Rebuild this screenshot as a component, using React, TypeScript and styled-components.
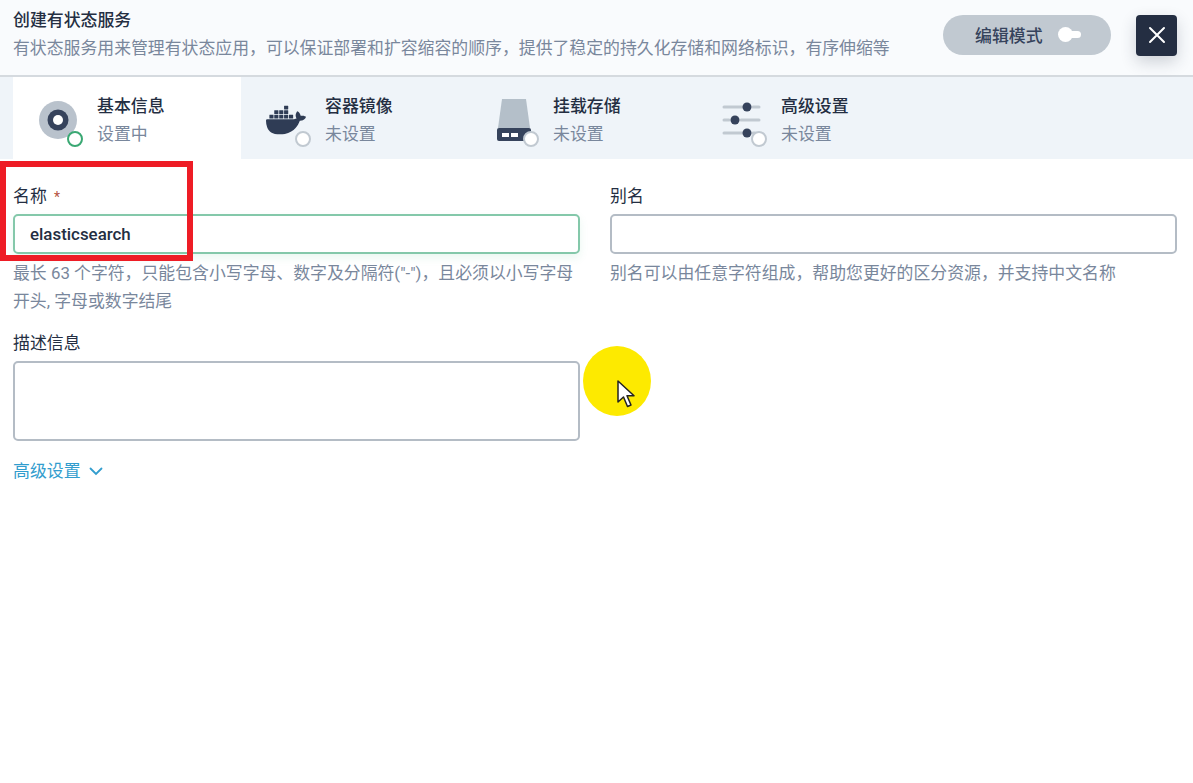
import React from 'react';
import styled, { createGlobalStyle } from 'styled-components';
import { SiDocker } from 'react-icons/si';

const FONT = `Roboto, "Noto Sans CJK SC", "Liberation Sans", sans-serif`;

const GlobalStyle = createGlobalStyle`
  html, body { margin: 0; padding: 0; background: #fff; }
  body { font-family: ${FONT}; color: #242e42; }
  * { box-sizing: border-box; }
`;

const tabs = [
  { key: 'base', title: '基本信息', desc: '设置中', active: true },
  { key: 'image', title: '容器镜像', desc: '未设置' },
  { key: 'mount', title: '挂载存储', desc: '未设置' },
  { key: 'advanced', title: '高级设置', desc: '未设置' },
];

const TabIcon = ({ name }: { name: string }) => {
  if (name === 'base') {
    return (
      <svg width="40" height="40" viewBox="0 0 40 40">
        <circle cx="20" cy="20" r="19" fill="#b9c2cc" />
        <circle cx="20" cy="20" r="10.5" fill="#36435c" />
        <circle cx="20" cy="20" r="5" fill="#fff" />
      </svg>
    );
  }
  if (name === 'image') {
    return <SiDocker size={46} color="#2f3c55" />;
  }
  if (name === 'mount') {
    return (
      <svg width="40" height="44" viewBox="0 0 40 44">
        <path d="M8 1h24l4 29H4z" fill="#b4bfc9" />
        <path d="M5 30h30a2 2 0 0 1 2 2v9a2 2 0 0 1-2 2H5a2 2 0 0 1-2-2v-9a2 2 0 0 1 2-2z" fill="#36435c" />
        <rect x="8" y="35" width="7" height="4" fill="#fff" />
        <rect x="17" y="35" width="7" height="4" fill="#fff" />
      </svg>
    );
  }
  return (
    <svg width="40" height="40" viewBox="0 0 40 40">
      <g stroke="#c1c9d1" strokeWidth="3" strokeLinecap="round">
        <path d="M2 7h18M31 7h6M2 20h5M19 20h18M2 33h18M31 33h2" />
      </g>
      <circle cx="25" cy="7" r="4.500" fill="#36435c" />
      <circle cx="13" cy="20" r="4.500" fill="#36435c" />
      <circle cx="25" cy="33" r="4.500" fill="#36435c" />
    </svg>
  );
};

export default function App() {
  return (
    <Page>
      <GlobalStyle />
      <Header>
        <HeaderText>
          <Title>创建有状态服务</Title>
          <Subtitle>有状态服务用来管理有状态应用，可以保证部署和扩容缩容的顺序，提供了稳定的持久化存储和网络标识，有序伸缩等</Subtitle>
        </HeaderText>
        <EditMode>
          编辑模式
          <Toggle />
        </EditMode>
        <CloseButton aria-label="关闭">
          <svg width="18" height="18" viewBox="0 0 18 18">
            <path d="M2 2l14 14M16 2L2 16" stroke="#fff" strokeWidth="2" strokeLinecap="round" />
          </svg>
        </CloseButton>
      </Header>
      <TabBar>
        {tabs.map(tab => (
          <Tab key={tab.key} $active={!!tab.active}>
            <IconSlot>
              <TabIcon name={tab.key} />
              <StatusRing $active={!!tab.active} />
            </IconSlot>
            <div>
              <TabTitle>{tab.title}</TabTitle>
              <TabDesc>{tab.desc}</TabDesc>
            </div>
          </Tab>
        ))}
      </TabBar>
      <Form>
        <FieldRow>
          <Field>
            <Label>
              名称 <Required>*</Required>
            </Label>
            <TextInput $focused readOnly value="elasticsearch" />
            <Hint>最长 63 个字符，只能包含小写字母、数字及分隔符("-")，且必须以小写字母开头, 字母或数字结尾</Hint>
          </Field>
          <Field>
            <Label>别名</Label>
            <TextInput readOnly value="" />
            <Hint>别名可以由任意字符组成，帮助您更好的区分资源，并支持中文名称</Hint>
          </Field>
        </FieldRow>
        <DescField>
          <Label>描述信息</Label>
          <TextArea readOnly value="" />
        </DescField>
        <AdvancedLink>
          高级设置
          <svg width="14" height="9" viewBox="0 0 14 9">
            <path d="M1.5 1.5L7 7l5.500-5.500" fill="none" stroke="#329dce" strokeWidth="1.8" strokeLinecap="round" />
          </svg>
        </AdvancedLink>
      </Form>
      <Highlight />
      <CursorHalo>
        <svg width="20" height="30" viewBox="0 0 20 30">
          <path d="M2 2v21l5.500-5 4 9.500 3.500-1.500-4-9.200H18z" fill="#fff" stroke="#222" strokeWidth="1.5" strokeLinejoin="round" />
        </svg>
      </CursorHalo>
    </Page>
  );
}

const Page = styled.div`
  position: relative;
  width: 1193px;
  height: 783px;
  overflow: hidden;
  background: #fff;
  font-size: 17px;
`;

const Header = styled.header`
  display: flex;
  align-items: center;
  height: 77px;
  padding: 0 16px 0 13px;
  background: #f9fbfd;
  border-bottom: 2px solid #d5dadf;
`;

const HeaderText = styled.div`
  flex: 1;
  padding-bottom: 7px;
`;

const Title = styled.div`
  font-size: 16.9px;
  line-height: 28px;
  font-weight: 500;
  color: #242e42;
`;

const Subtitle = styled.div`
  font-size: 16.87px;
  line-height: 28px;
  color: #79879c;
  white-space: nowrap;
`;

const EditMode = styled.div`
  display: flex;
  align-items: center;
  width: 168px;
  height: 40px;
  margin: 0 25px 6px 0;
  padding-left: 32px;
  border-radius: 20px;
  background: #c1c9d1;
  color: #36435c;
  font-size: 16.9px;
  font-weight: 500;
`;

const Toggle = styled.span`
  position: relative;
  width: 22px;
  height: 7px;
  margin-left: 16px;
  border-radius: 4px;
  background: #fff;

  &::before {
    content: '';
    position: absolute;
    left: -1px;
    top: -4px;
    width: 15px;
    height: 15px;
    border-radius: 50%;
    background: #fff;
  }
`;

const CloseButton = styled.button`
  display: flex;
  align-items: center;
  justify-content: center;
  width: 41px;
  height: 41px;
  margin-bottom: 5px;
  padding: 0;
  border: 0;
  border-radius: 4px;
  background: #242e42;
  box-shadow: 0 6px 16px rgba(36, 46, 66, 0.2);
`;

const TabBar = styled.nav`
  display: flex;
  height: 82px;
  padding-left: 13px;
  background: #eff4f9;
`;

const Tab = styled.div<{ $active: boolean }>`
  display: flex;
  align-items: center;
  width: 228px;
  padding: 4px 0 0 25px;
  background: ${props => (props.$active ? '#fff' : 'transparent')};
`;

const IconSlot = styled.div`
  position: relative;
  display: flex;
  align-items: center;
  justify-content: center;
  width: 40px;
  height: 44px;
  margin-right: 19px;
`;

const StatusRing = styled.span<{ $active: boolean }>`
  position: absolute;
  right: -5px;
  bottom: -5px;
  width: 16px;
  height: 16px;
  border-radius: 50%;
  background: #fff;
  border: 2.5px solid ${props => (props.$active ? '#3aa873' : '#c1c9d1')};
`;

const TabTitle = styled.div`
  font-size: 16.9px;
  line-height: 28px;
  font-weight: 500;
  color: #242e42;
`;

const TabDesc = styled.div`
  font-size: 16.9px;
  line-height: 28px;
  color: #79879c;
`;

const Form = styled.div`
  padding: 23px 16px 0 13px;
`;

const FieldRow = styled.div`
  display: grid;
  grid-template-columns: 567px 567px;
  column-gap: 30px;
`;

const Field = styled.div`
  min-width: 0;
`;

const DescField = styled.div`
  width: 567px;
  margin-top: 14px;
`;

const Label = styled.div`
  height: 32px;
  font-size: 16.9px;
  line-height: 28px;
  color: #242e42;
`;

const Required = styled.span`
  margin-left: 3px;
  font-size: 14px;
  color: #b5533f;
`;

const TextInput = styled.input<{ $focused?: boolean }>`
  display: block;
  width: 100%;
  height: 40px;
  padding: 0 15px;
  border: 2px solid ${props => (props.$focused ? '#84c8aa' : '#b4bcc5')};
  border-radius: 5px;
  outline: none;
  background: #fff;
  color: #242e42;
  font-family: ${FONT};
  font-size: 16.9px;
  font-weight: 500;
  box-shadow: ${props => (props.$focused ? '0 4px 8px rgba(85, 188, 138, 0.12)' : 'none')};
`;

const Hint = styled.div`
  margin-top: 5px;
  font-size: 16.87px;
  line-height: 28px;
  color: #79879c;
`;

const TextArea = styled.textarea`
  display: block;
  width: 100%;
  height: 80px;
  border: 2px solid #b4bcc5;
  border-radius: 5px;
  outline: none;
  resize: none;
  background: #fff;
`;

const AdvancedLink = styled.div`
  display: flex;
  align-items: center;
  gap: 8px;
  margin-top: 16px;
  font-size: 16.9px;
  line-height: 28px;
  color: #329dce;
`;

const Highlight = styled.div`
  position: absolute;
  left: 0;
  top: 161px;
  width: 193px;
  height: 100px;
  border: 6px solid #ee1c25;
  pointer-events: none;
`;

const CursorHalo = styled.div`
  position: absolute;
  left: 583px;
  top: 346px;
  width: 68px;
  height: 70px;
  border-radius: 50%;
  background: #fdea00;

  svg {
    position: absolute;
    left: 33px;
    top: 33px;
  }
`;
